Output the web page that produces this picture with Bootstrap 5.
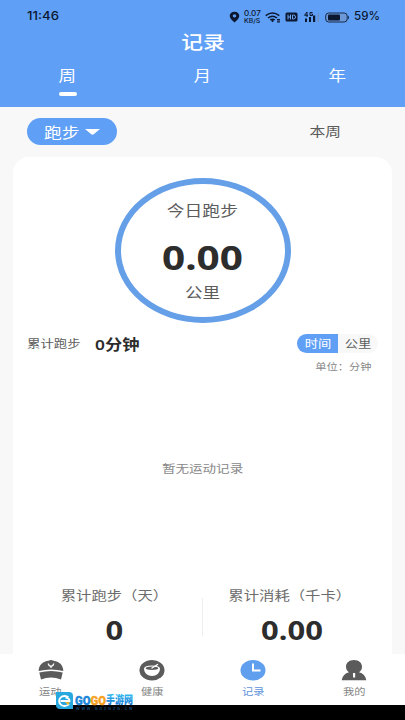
<!DOCTYPE html>
<html lang="zh-CN">
<head>
<meta charset="utf-8">
<meta name="viewport" content="width=device-width, initial-scale=1">
<title>记录</title>
<link href="https://cdn.jsdelivr.net/npm/bootstrap@5.3.0/dist/css/bootstrap.min.css" rel="stylesheet">
<style>
body{font-family:Roboto,"Noto Sans CJK SC",sans-serif;background:#f8f8f8;color:#5c5c5c;height:720px;line-height:1}
.wide{display:inline-block;transform:scaleX(1.21);white-space:nowrap}
.from-left{transform-origin:left center}
.from-right{transform-origin:right center}
.app-head{background:#5f9ff6;height:107px}
.status{height:33px;padding:1px 25px 0 27px;color:#0b1830}
.clock{font:500 11.600px/1 Inter,sans-serif}
.clock.wide{transform:scaleX(1.14)}
.speed{font:500 7px/7px Inter,sans-serif;width:17px}
.speed .wide{transform:scaleX(1.15)}
.speed .wide+br+.wide{font-size:6px}
.page-title{font-size:18px;font-weight:500;line-height:20px}
.period{font-size:14.500px;line-height:20px;margin-top:14px}
.bar{width:18px;height:4px;margin:5px auto 0;background:#fff}
.filters{height:50px;padding:11px 64px 0 27px}
.sport{width:90px;height:27px;background:#5f9ff6;font-size:14.700px;padding-left:17px;padding-right:17px}
.this-week{font-size:13px;line-height:28px}
.panel{width:379px;height:497px;margin-left:13px;border-radius:16px 16px 0 0}
.ring{width:176px;height:145px;border:6px solid #659fe8;margin-top:21px}
.ring-label{font-size:14.700px;line-height:18px;margin-top:18px}
.ring-value{font:700 33.500px/34px "Noto Sans",sans-serif;color:#2d2d2d;margin-top:20px}
.ring-unit{font-size:14.500px;line-height:18px;margin-top:11px}
.summary{height:42px;padding:12px 14px 0 14px}
.sum-label{font-size:11.100px;line-height:20px;width:68px}
.sum-value{font-size:14.300px;line-height:19px;color:#2c2c2c;font-weight:600;font-family:"Noto Sans","Noto Sans CJK SC",sans-serif}
.units{width:81px;height:19px;background:#f8f8f8;font-size:11px;margin-top:-1px}
.units>div{line-height:21px}
.unit-on{width:41px;background:#5f9ff6}
.unit-note{font-size:9.300px;line-height:12px;color:#888;margin-top:8px;padding-right:7px}
.empty{font-size:11.200px;line-height:20px;color:#888;margin-top:95px}
.totals{margin-top:106px}
.total-label{font-size:12.700px;line-height:20px;color:#6c6c6c}
.total-value{font:700 26px/28px "Noto Sans",sans-serif;margin-top:10px;color:#2d2d2d}
.total-value .wide{transform:scaleX(1.19)}
.rule{width:2px;height:38px;margin-top:12px;background:#eee}
.run-total{padding-left:15px}
.burn-total{padding-right:16px}
.tabs{height:51px;padding-top:5px}
.tab-text{font-size:9.300px;line-height:12px;margin-top:5px;color:#858585}
.tab-text.on{color:#5f94dc}
.foot{height:15px;background:#000}
.logo{position:absolute;left:55px;top:691px}
</style>
</head>
<body class="overflow-hidden position-relative">
<header class="app-head text-white">
  <div class="status d-flex align-items-center justify-content-between">
    <span class="wide from-left clock">11:46</span>
    <div class="d-flex align-items-center">
      <svg width="11" height="12" viewBox="0 0 11 12"><path fill="#0b1830" fill-rule="evenodd" d="M5.500.8C2.600.8.7 2.500.7 5c0 2.500 2.800 4.600 4.800 6.600C7.500 9.600 10.300 7.500 10.300 5 10.300 2.500 8.400.8 5.500.8Zm0 2.500a1.700 1.500 0 1 1 0 3.100 1.700 1.500 0 0 1 0-3.100Z"/></svg>
      <div class="speed text-center ms-1"><span class="wide">0.07</span><br><span class="wide">KB/S</span></div>
      <svg class="ms-1" width="16" height="11" viewBox="0 0 16 11" fill="none" stroke="#0b1830" stroke-width="1.500"><path d="M.7 3.700Q7.500-1.500 14.300 3.700M3 6Q7.500 2.500 12 6M5.200 8Q7.500 6.400 9.800 8"/><path fill="#0b1830" stroke="none" d="m6 8.800 1.500-1 1.500 1-1.500 1.500ZM12 7h3v1.500h-3ZM12 9.200h3v1.200h-3Z"/></svg>
      <svg class="ms-1" width="13" height="10" viewBox="0 0 13 10"><rect x=".5" y=".5" width="12" height="9" rx="1.500" fill="#0b1830"/><path d="M3 2.500v5M3 5h2.500M5.500 2.500v5M7.500 3v4h1q2 0 2-2t-2-2Z" fill="none" stroke="#6ca5f2" stroke-width="1"/></svg>
      <svg class="ms-1" width="19" height="12" viewBox="-1 0 19 12"><path fill="none" stroke="#0b1830" d="M4 6V1L1.500 4.300H5M9.500 1.500H7v3h2.500V3H8.300"/><path fill="#0b1830" d="M2 7.500h2V11H2ZM6 6h2v5H6ZM10 4.500h2.200V11H10Z"/><path fill="#7190c2" d="M14.500 2.500h1.500V11h-1.500Z"/></svg>
      <svg class="ms-1 me-1" width="25" height="11" viewBox="0 0 25 11"><rect x=".7" y="1" width="21.500" height="9" rx="3" fill="#6d99d9" stroke="#162a4a"/><rect x="3" y="2.500" width="12" height="6" rx="1" fill="#0b1830"/><path d="M23 3.500q2 2 0 4Z" fill="#162a4a"/></svg>
      <span class="clock">59%</span>
    </div>
  </div>
  <h1 class="page-title text-center m-0"><span class="wide">记录</span></h1>
  <nav class="row g-0 text-center">
    <div class="col period"><span class="wide">周</span><div class="bar rounded-pill"></div></div>
    <div class="col period"><span class="wide">月</span></div>
    <div class="col period"><span class="wide">年</span></div>
  </nav>
</header>
<div class="filters d-flex justify-content-between align-items-start">
  <div class="sport rounded-pill text-white d-flex align-items-center justify-content-between">
    <span class="wide from-left pt-1">跑步</span>
    <svg width="15" height="6" viewBox="0 0 15 6"><path d="M0 0h15L9 5Q7.500 6.300 6 5Z" fill="#fff"/></svg>
  </div>
  <span class="wide from-right this-week">本周</span>
</div>
<main class="panel bg-white d-flex flex-column">
  <div class="ring rounded-circle mx-auto text-center flex-shrink-0">
    <div class="ring-label"><span class="wide">今日跑步</span></div>
    <div class="ring-value"><span class="wide">0.00</span></div>
    <div class="ring-unit"><span class="wide">公里</span></div>
  </div>
  <div class="summary d-flex">
    <span class="sum-label"><span class="wide from-left">累计跑步</span></span>
    <span class="sum-value"><span class="wide from-left">0分钟</span></span>
    <div class="ms-auto">
      <div class="units d-flex rounded-pill overflow-hidden text-center">
        <div class="unit-on text-white"><span class="wide">时间</span></div>
        <div class="flex-fill"><span class="wide">公里</span></div>
      </div>
      <div class="unit-note text-end"><span class="wide from-right">单位：分钟</span></div>
    </div>
  </div>
  <div class="empty text-center"><span class="wide">暂无运动记录</span></div>
  <div class="totals d-flex text-center">
    <div class="flex-fill w-50 run-total"><div class="total-label"><span class="wide">累计跑步（天）</span></div><div class="total-value"><span class="wide">0</span></div></div>
    <div class="rule"></div>
    <div class="flex-fill w-50 burn-total"><div class="total-label"><span class="wide">累计消耗（千卡）</span></div><div class="total-value ps-1"><span class="wide">0.00</span></div></div>
  </div>
</main>
<nav class="tabs bg-white row g-0 text-center">
  <div class="col">
    <svg class="d-block mx-auto" width="26" height="22" viewBox="0 0 26 22"><path fill="#5b5b5b" d="M.7 12C.7 5.500 5.500 2.500 10.500 1.800Q13 .2 15.500 1.800C21 2.500 25.300 6 25.300 12Q13 9 .7 12ZM1.300 13.500Q13 10.500 24.700 13.500L23 20.500Q13 16.500 3 20.500Z"/><path fill="none" stroke="#fff" stroke-width="1.300" d="M13 9V6.500M12.800 7.200Q10.500 7 10.300 4.500M13.200 7.200Q15.500 7 15.700 4.500"/></svg>
    <div class="tab-text"><span class="wide">运动</span></div>
  </div>
  <div class="col">
    <svg class="d-block mx-auto" width="26" height="22" viewBox="0 0 26 22"><ellipse cx="13" cy="11.200" rx="12.500" ry="10.200" fill="#5b5b5b"/><path fill="#fff" d="M5 9.500Q5.500 6.500 13 6.500 20.500 6.500 21 9.500C21 14 17.500 17 13 17S5 14 5 9.500Z"/><ellipse cx="13" cy="9.300" rx="6.300" ry="1.700" fill="#5b5b5b"/><path stroke="#fff" stroke-width="1.400" stroke-linecap="round" d="m13 9 5.500-3.500"/></svg>
    <div class="tab-text"><span class="wide">健康</span></div>
  </div>
  <div class="col">
    <svg class="d-block mx-auto" width="26" height="22" viewBox="0 0 26 22"><ellipse cx="13" cy="11.200" rx="12.500" ry="10.200" fill="#5f9fee"/><path d="M13 4.500v7h7.500" fill="none" stroke="#fff" stroke-width="2"/></svg>
    <div class="tab-text on"><span class="wide">记录</span></div>
  </div>
  <div class="col">
    <svg class="d-block mx-auto" width="26" height="22" viewBox="0 0 26 22"><path fill="#5b5b5b" d="M13 1c4.700 0 8 2.800 8 6.700 0 2.400-1.200 4.300-3 5.500 4 1 6.600 3.800 7.300 8H.7c.7-4.200 3.300-7 7.300-8-1.800-1.200-3-3.100-3-5.500C5 3.800 8.300 1 13 1Z"/><path d="M12 14h2.200v4.500H12Z" fill="#fff"/></svg>
    <div class="tab-text"><span class="wide">我的</span></div>
  </div>
</nav>
<div class="foot"></div>
<svg class="logo" width="84" height="24" viewBox="0 0 84 24">
  <defs><linearGradient id="b" x2="0" y2="1"><stop stop-color="#37c4f5"/><stop offset="1" stop-color="#1267c9"/></linearGradient><linearGradient id="o" x2="0" y2="1"><stop stop-color="#ffc928"/><stop offset="1" stop-color="#f2801a"/></linearGradient></defs>
  <path d="M1 1h13q4 0 4 4v13H5q-4 0-4-4Z" fill="#27a9df"/>
  <path d="M13.500 6.500A5.500 5 0 1 0 14 13M5.500 10h9q0-3-4-3.500" fill="none" stroke="#fff" stroke-width="1.800"/>
  <path d="m10 11 5 .3-2 2.700Z" fill="#f4b52c"/>
  <g font-family="Roboto,'Noto Sans CJK SC',sans-serif" font-weight="900">
    <text x="20" y="13.500" font-size="13.500" textLength="15.500" lengthAdjust="spacingAndGlyphs" fill="#1c86d8" stroke="#1c86d8" stroke-width=".4">GO</text>
    <text x="35.500" y="13.500" font-size="13.500" textLength="15.500" lengthAdjust="spacingAndGlyphs" fill="#f7a021" stroke="#f7a021" stroke-width=".4">GO</text>
    <text x="51" y="13" font-size="11.500" textLength="27" lengthAdjust="spacingAndGlyphs" fill="url(#b)">手游网</text>
  </g>
  <text x="21" y="19" font-family="Roboto,sans-serif" font-size="4" textLength="56" fill="#1a6aa5">WWW.GOZGZG.CN</text>
</svg>
<script src="https://cdn.jsdelivr.net/npm/bootstrap@5.3.0/dist/js/bootstrap.bundle.min.js"></script>
</body>
</html>
